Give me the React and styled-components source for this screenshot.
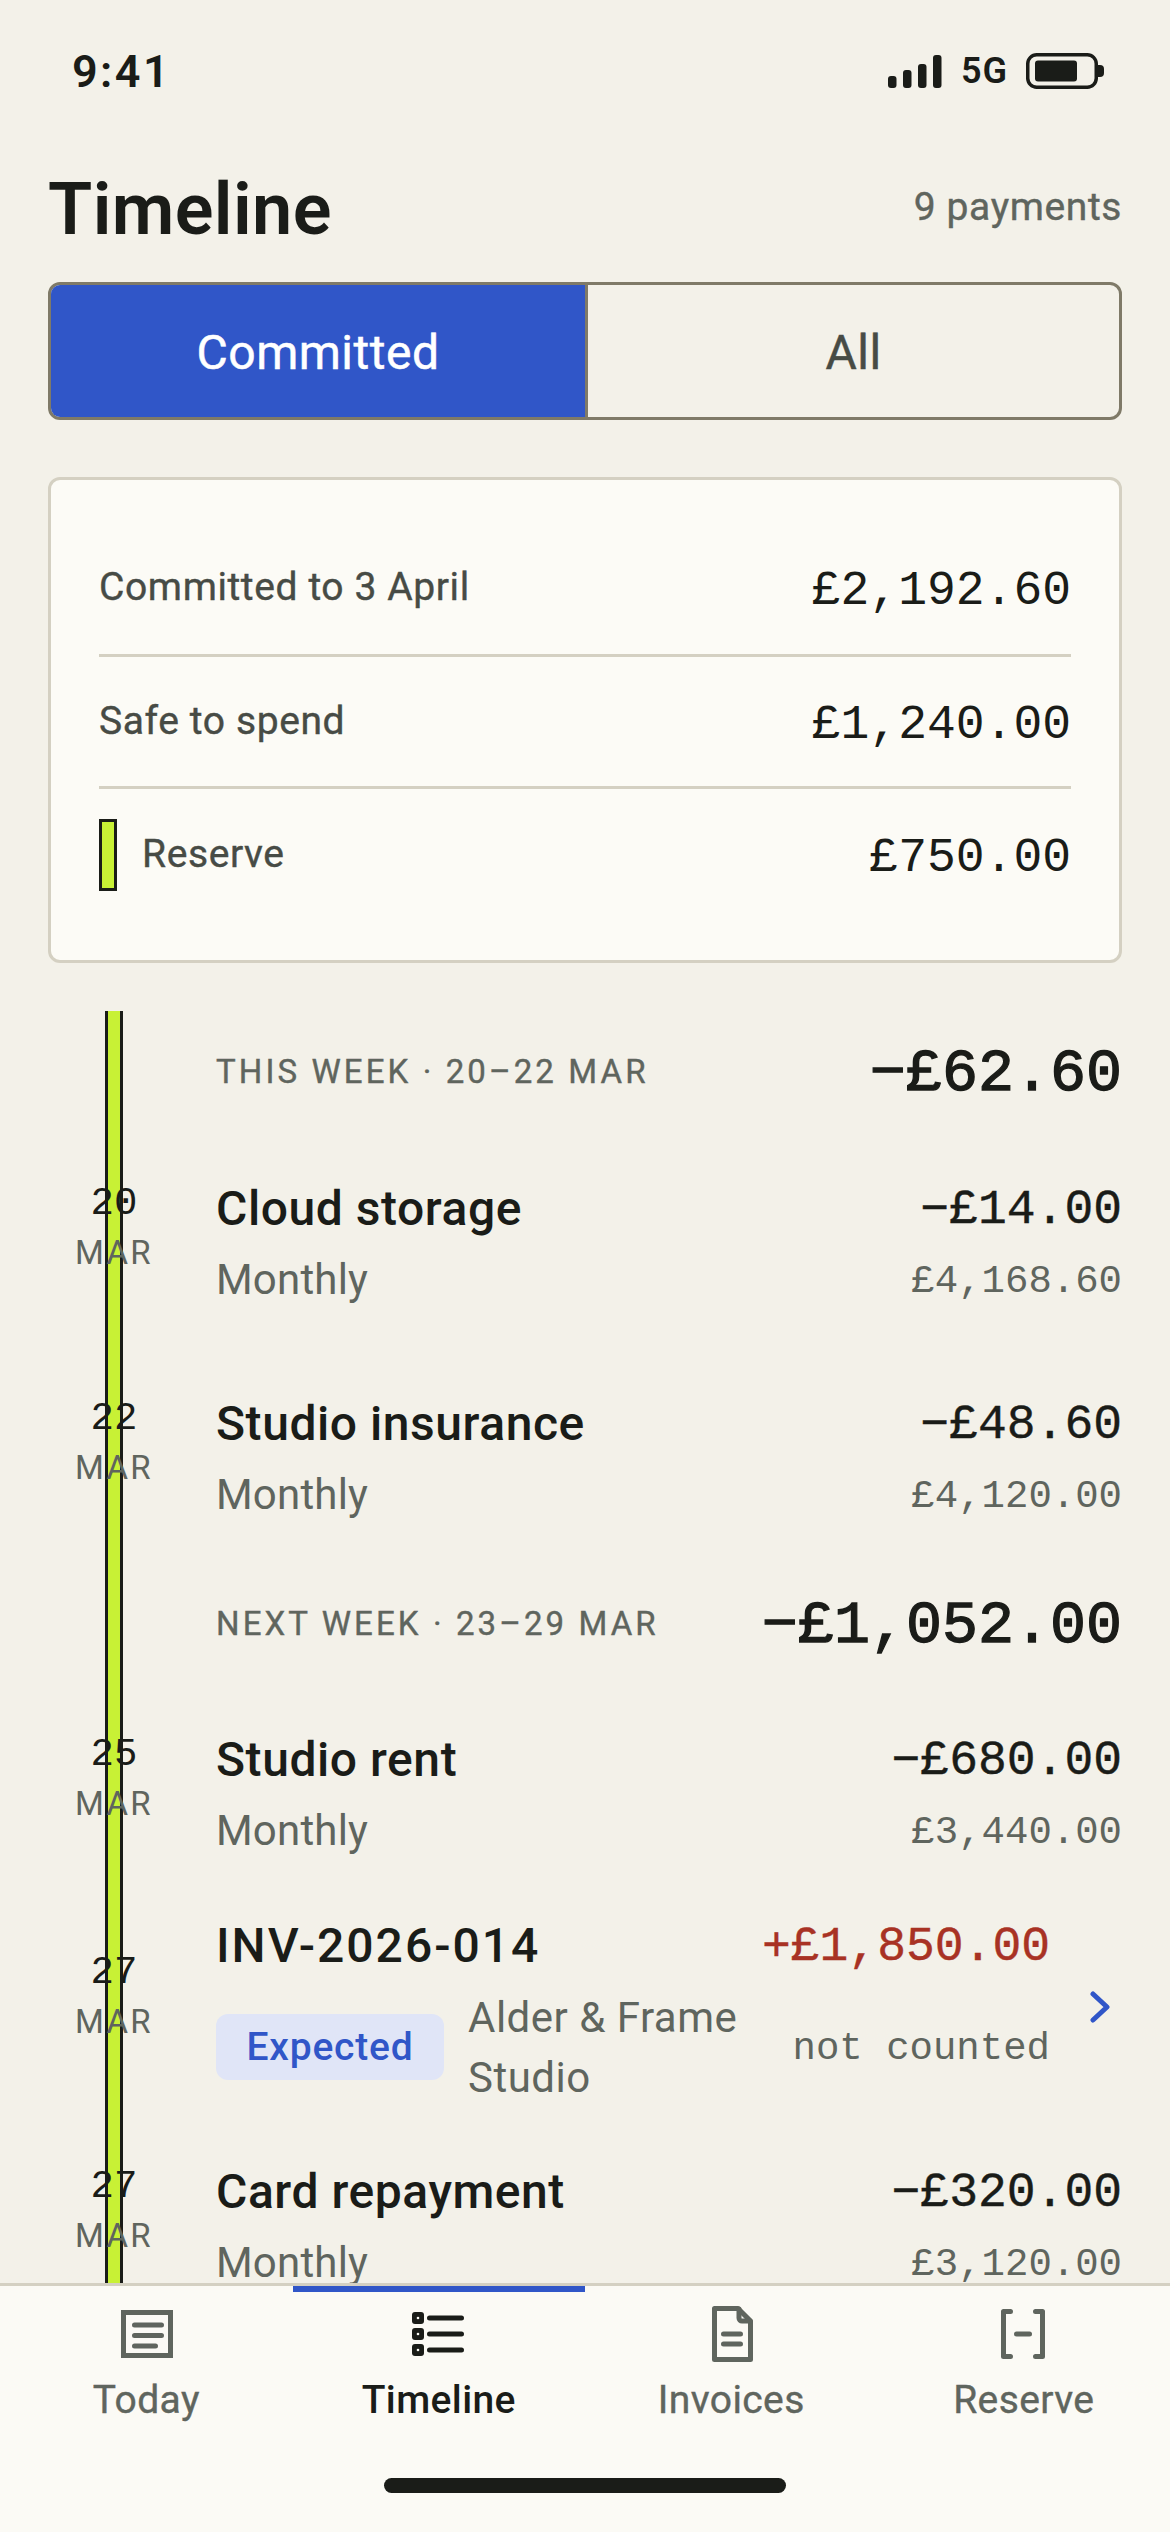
import React from "react";
import styled, { createGlobalStyle } from "styled-components";

const Sans = `Roboto, "Noto Sans", sans-serif`;
const Mono = `"Liberation Mono", monospace`;

const GlobalStyle = createGlobalStyle`
  html, body { margin: 0; padding: 0; background: #f3f1e9; }
  * { box-sizing: border-box; }
`;

const Screen = styled.div`
  width: 1170px;
  height: 2532px;
  display: flex;
  flex-direction: column;
  overflow: hidden;
  background: #f3f1e9;
  color: #1a1c18;
  font-family: ${Sans};
`;

const Scroll = styled.main`
  flex: 1;
  min-height: 0;
  overflow: hidden;
  padding: 0 48px;
`;

const StatusBar = styled.div`
  height: 142px;
  margin: 0 -48px;
  padding: 0 66px 0 72px;
  display: flex;
  align-items: center;
  justify-content: space-between;
`;

const Clock = styled.span`
  font-size: 45px;
  font-weight: 600;
  letter-spacing: 2.4px;
`;

const StatusIcons = styled.div`
  display: flex;
  align-items: center;
`;

const Network = styled.span`
  font-size: 36px;
  font-weight: 600;
  letter-spacing: 1px;
  margin: 0 18px 0 19px;
`;

const TitleRow = styled.div`
  margin-top: 21px;
  height: 90px;
  display: flex;
  align-items: center;
  justify-content: space-between;
`;

const Title = styled.h1`
  margin: 0;
  padding-top: 3px;
  font-size: 72px;
  font-weight: 600;
  line-height: 90px;
  letter-spacing: 0.4px;
`;

const Count = styled.span`
  padding-bottom: 3px;
  font-size: 39px;
  -webkit-text-stroke: 0.4px;
  color: #5f655e;
  letter-spacing: 0.6px;
`;

const Segment = styled.div`
  margin-top: 29px;
  height: 138px;
  display: grid;
  grid-template-columns: 1fr 1fr;
  border: 3px solid #7f7a68;
  border-radius: 12px;
  overflow: hidden;
`;

const SegmentItem = styled.button`
  border: 0;
  padding: 3px 0 0;
  font-family: inherit;
  font-size: 48px;
  -webkit-text-stroke: 0.5px;
  letter-spacing: 0.5px;
  background: ${(p) => (p.$active ? "#3056c8" : "transparent")};
  color: ${(p) => (p.$active ? "#ffffff" : "#474b45")};
  & + & {
    border-left: 3px solid #7f7a68;
  }
`;

const SummaryCard = styled.section`
  margin-top: 57px;
  height: 486px;
  padding: 42px 48px 39px;
  background: #fcfbf6;
  border: 3px solid #d4d0c2;
  border-radius: 12px;
`;

const SummaryRow = styled.div`
  height: ${(p) => p.$h}px;
  display: flex;
  align-items: center;
  justify-content: space-between;
`;

const SummaryDivider = styled.div`
  height: 3px;
  background: #d4d0c2;
`;

const SummaryLabel = styled.span`
  display: flex;
  align-items: center;
  gap: 25px;
  font-size: 39px;
  -webkit-text-stroke: 0.4px;
  letter-spacing: 0.6px;
  color: #474b45;
  margin-top: -2px;
`;

const SummaryValue = styled.span`
  padding-top: 6px;
  font-family: ${Mono};
  font-size: 48px;
  color: #1a1c18;
`;

const ReserveSwatch = styled.i`
  display: block;
  width: 18px;
  height: 72px;
  background: #c8f135;
  border: 3px solid #1a1c18;
  margin-top: 2px;
`;

const Timeline = styled.section`
  position: relative;
  margin-top: 48px;
  padding-top: 21px;
  padding-bottom: 60px;
`;

const Rail = styled.div`
  position: absolute;
  top: 0;
  bottom: 0;
  left: 57px;
  width: 18px;
  background: #c8f135;
  border-left: 3px solid #1a1c18;
  border-right: 3px solid #1a1c18;
`;

const WeekHead = styled.div`
  position: relative;
  margin-left: 168px;
  margin-bottom: ${(p) => p.$after}px;
  height: 78px;
  display: flex;
  align-items: center;
  justify-content: space-between;
`;

const WeekLabel = styled.span`
  font-size: 33px;
  -webkit-text-stroke: 0.4px;
  letter-spacing: 3.1px;
  color: #5f655e;
`;

const WeekTotal = styled.span`
  padding-top: 5px;
  font-family: ${Mono};
  font-size: 60px;
  -webkit-text-stroke: 1.3px #1a1c18;
`;

const Row = styled.article`
  position: relative;
  display: grid;
  grid-template-columns: 132px 1fr;
  column-gap: 36px;
  align-items: center;
  margin-bottom: ${(p) => p.$after}px;
`;

const DateBlock = styled.div`
  display: flex;
  flex-direction: column;
  align-items: center;
  padding-bottom: 28px;
`;

const Day = styled.span`
  padding-top: 3px;
  margin-bottom: -3px;
  font-family: ${Mono};
  font-size: 39px;
  line-height: 51px;
`;

const Month = styled.span`
  font-size: 33px;
  line-height: 51px;
  letter-spacing: 2.4px;
  color: #5f655e;
`;

const Content = styled.div`
  display: grid;
  grid-template-columns: 1fr ${(p) => (p.$link ? "72px" : "")};
  align-items: center;
`;

const Line = styled.div`
  height: 66px;
  display: flex;
  align-items: center;
  justify-content: space-between;
`;

const SubLine = styled.div`
  margin-top: 11px;
  height: 54px;
  display: flex;
  align-items: center;
  justify-content: space-between;
`;

const Name = styled.span`
  font-size: 48px;
  font-weight: 500;
  letter-spacing: ${(p) => (p.$code ? "2px" : "0.55px")};
`;

const Amount = styled.span`
  padding-top: 3px;
  font-family: ${Mono};
  font-size: 48px;
  color: ${(p) => (p.$income ? "#a83224" : "#1a1c18")};
  -webkit-text-stroke: 0.4px ${(p) => (p.$income ? "#a83224" : "#1a1c18")};
`;

const Schedule = styled.span`
  font-size: 42px;
  letter-spacing: 0.2px;
  color: #5f655e;
`;

const Balance = styled.span`
  padding-top: 6px;
  font-family: ${Mono};
  font-size: 39px;
  color: #5f655e;
`;

const InvoiceLine = styled.div`
  margin-top: 8px;
  display: flex;
  align-items: center;
  gap: 24px;
`;

const Badge = styled.span`
  flex: none;
  width: 228px;
  height: 66px;
  display: flex;
  align-items: center;
  justify-content: center;
  border-radius: 12px;
  background: #e0e5f7;
  color: #3056c8;
  font-size: 39px;
  font-weight: 500;
  letter-spacing: 0.8px;
`;

const Client = styled.span`
  flex: 1;
  min-width: 0;
  padding-top: 2px;
  font-size: 42px;
  line-height: 60px;
  letter-spacing: 0.5px;
  color: #5f655e;
`;

const Note = styled.span`
  flex: none;
  padding-top: 4px;
  font-family: ${Mono};
  font-size: 39px;
  color: #5f655e;
`;

const ChevronCell = styled.div`
  display: flex;
  justify-content: flex-end;
  padding-right: 12px;
  margin-top: -6px;
`;

const BottomNav = styled.nav`
  position: relative;
  flex: none;
  height: 249px;
  padding-bottom: 115px;
  display: grid;
  grid-template-columns: repeat(4, 1fr);
  background: #fbfaf5;
  border-top: 3px solid #d4d0c2;
`;

const Tab = styled.a`
  position: relative;
  display: flex;
  flex-direction: column;
  align-items: center;
  padding-top: 12px;
  font-size: 39px;
  font-weight: ${(p) => (p.$active ? 500 : 400)};
  -webkit-text-stroke: ${(p) => (p.$active ? "0" : "0.4px")};
  letter-spacing: 0.4px;
  line-height: 50px;
  color: ${(p) => (p.$active ? "#1a1c18" : "#5f655e")};
  &::before {
    content: "";
    display: ${(p) => (p.$active ? "block" : "none")};
    position: absolute;
    top: 0;
    left: 0;
    right: 0;
    height: 6px;
    background: #3056c8;
  }
`;

const TabIcon = styled.svg`
  display: block;
  width: 72px;
  height: 72px;
  margin-bottom: 5px;
  fill: none;
  stroke: currentColor;
  stroke-width: 5;
  stroke-linecap: round;
  stroke-linejoin: round;
`;

const HomeIndicator = styled.div`
  position: absolute;
  left: 384px;
  bottom: 39px;
  width: 402px;
  height: 15px;
  border-radius: 8px;
  background: #1a1c18;
`;

const SignalIcon = () => (
  <svg width="54" height="33" viewBox="0 0 54 33" fill="#1a1c18">
    <rect x="0" y="21" width="8.5" height="12" rx="3" />
    <rect x="15" y="15" width="8.5" height="18" rx="3" />
    <rect x="30" y="9" width="8.5" height="24" rx="3" />
    <rect x="45" y="0" width="8.5" height="33" rx="3" />
  </svg>
);

const BatteryIcon = () => (
  <svg width="78" height="36" viewBox="0 0 78 36">
    <rect x="1.75" y="1.75" width="68.5" height="32.5" rx="9" fill="none" stroke="#1a1c18" strokeWidth="3.5" />
    <rect x="9" y="6" width="42" height="21" rx="3" fill="#1a1c18" transform="translate(0 1.5)" />
    <path d="M72 12h2a4 4 0 0 1 4 4v4a4 4 0 0 1-4 4h-2z" fill="#1a1c18" />
  </svg>
);

const Chevron = () => (
  <svg width="20" height="32" viewBox="0 0 20 32" fill="none" stroke="#3056c8" strokeWidth="5" strokeLinecap="round" strokeLinejoin="round">
    <path d="M3 3l14 13L3 29" />
  </svg>
);

const TodayIcon = () => (
  <TabIcon viewBox="0 0 72 72">
    <rect x="13.5" y="14.5" width="47" height="43" strokeLinejoin="miter" />
    <path d="M24.5 27h27M24.5 37.5h27M24.5 48h21" />
  </TabIcon>
);

const TimelineIcon = () => (
  <TabIcon viewBox="0 0 72 72">
    <rect x="9" y="14" width="12" height="12" rx="3" fill="currentColor" stroke="none" />
    <rect x="9" y="30" width="12" height="12" rx="3" fill="currentColor" stroke="none" />
    <rect x="9" y="46" width="12" height="12" rx="3" fill="currentColor" stroke="none" />
    <circle cx="15" cy="20" r="1.3" fill="#fbfaf5" stroke="none" />
    <circle cx="15" cy="36" r="1.3" fill="#fbfaf5" stroke="none" />
    <circle cx="15" cy="52" r="1.3" fill="#fbfaf5" stroke="none" />
    <path d="M26.5 20h32M26.5 36h32M26.5 52h32" />
  </TabIcon>
);

const InvoiceIcon = () => (
  <TabIcon viewBox="0 0 72 72">
    <path d="M19.5 10.5H43L55.5 23v38.5h-36z" />
    <path d="M44 11v9a3 3 0 0 0 3 3h8" />
    <path d="M28.5 36h17M28.5 46h17" />
  </TabIcon>
);

const ReserveIcon = () => (
  <TabIcon viewBox="0 0 72 72">
    <path d="M22.5 13.5h-7v45h7M47.5 13.5h7v45h-7" />
    <path d="M28.5 36h13" />
  </TabIcon>
);

const tabs = [
  { label: "Today", Icon: TodayIcon },
  { label: "Timeline", Icon: TimelineIcon, active: true },
  { label: "Invoices", Icon: InvoiceIcon },
  { label: "Reserve", Icon: ReserveIcon },
];

const Payment = ({ day, name, amount, balance, after }) => (
  <Row $after={after}>
    <DateBlock>
      <Day>{day}</Day>
      <Month>MAR</Month>
    </DateBlock>
    <Content>
      <div>
        <Line>
          <Name>{name}</Name>
          <Amount>{amount}</Amount>
        </Line>
        <SubLine>
          <Schedule>Monthly</Schedule>
          <Balance>{balance}</Balance>
        </SubLine>
      </div>
    </Content>
  </Row>
);

const App = () => (
  <>
    <GlobalStyle />
    <Screen>
      <Scroll>
        <StatusBar>
          <Clock>9:41</Clock>
          <StatusIcons>
            <SignalIcon />
            <Network>5G</Network>
            <BatteryIcon />
          </StatusIcons>
        </StatusBar>
        <TitleRow>
          <Title>Timeline</Title>
          <Count>9 payments</Count>
        </TitleRow>
        <Segment>
          <SegmentItem $active>Committed</SegmentItem>
          <SegmentItem>All</SegmentItem>
        </Segment>
        <SummaryCard>
          <SummaryRow $h={132}>
            <SummaryLabel>Committed to 3 April</SummaryLabel>
            <SummaryValue>£2,192.60</SummaryValue>
          </SummaryRow>
          <SummaryDivider />
          <SummaryRow $h={129}>
            <SummaryLabel>Safe to spend</SummaryLabel>
            <SummaryValue>£1,240.00</SummaryValue>
          </SummaryRow>
          <SummaryDivider />
          <SummaryRow $h={132}>
            <SummaryLabel>
              <ReserveSwatch />
              Reserve
            </SummaryLabel>
            <SummaryValue>£750.00</SummaryValue>
          </SummaryRow>
        </SummaryCard>
        <Timeline>
          <Rail />
          <WeekHead $after={65}>
            <WeekLabel>THIS WEEK · 20–22 MAR</WeekLabel>
            <WeekTotal>−£62.60</WeekTotal>
          </WeekHead>
          <Payment day="20" name="Cloud storage" amount="−£14.00" balance="£4,168.60" after={84} />
          <Payment day="22" name="Studio insurance" amount="−£48.60" balance="£4,120.00" after={63} />
          <WeekHead $after={64}>
            <WeekLabel>NEXT WEEK · 23–29 MAR</WeekLabel>
            <WeekTotal>−£1,052.00</WeekTotal>
          </WeekHead>
          <Payment day="25" name="Studio rent" amount="−£680.00" balance="£3,440.00" after={55} />
          <Row $after={50}>
            <DateBlock>
              <Day>27</Day>
              <Month>MAR</Month>
            </DateBlock>
            <Content $link>
              <div>
                <Line>
                  <Name $code>INV-2026-014</Name>
                  <Amount $income>+£1,850.00</Amount>
                </Line>
                <InvoiceLine>
                  <Badge>Expected</Badge>
                  <Client>Alder &amp; Frame Studio</Client>
                  <Note>not counted</Note>
                </InvoiceLine>
              </div>
              <ChevronCell>
                <Chevron />
              </ChevronCell>
            </Content>
          </Row>
          <Payment day="27" name="Card repayment" amount="−£320.00" balance="£3,120.00" after={0} />
        </Timeline>
      </Scroll>
      <BottomNav>
        {tabs.map(({ label, Icon, active }) => (
          <Tab key={label} $active={active}>
            <Icon />
            {label}
          </Tab>
        ))}
        <HomeIndicator />
      </BottomNav>
    </Screen>
  </>
);

export default App;
